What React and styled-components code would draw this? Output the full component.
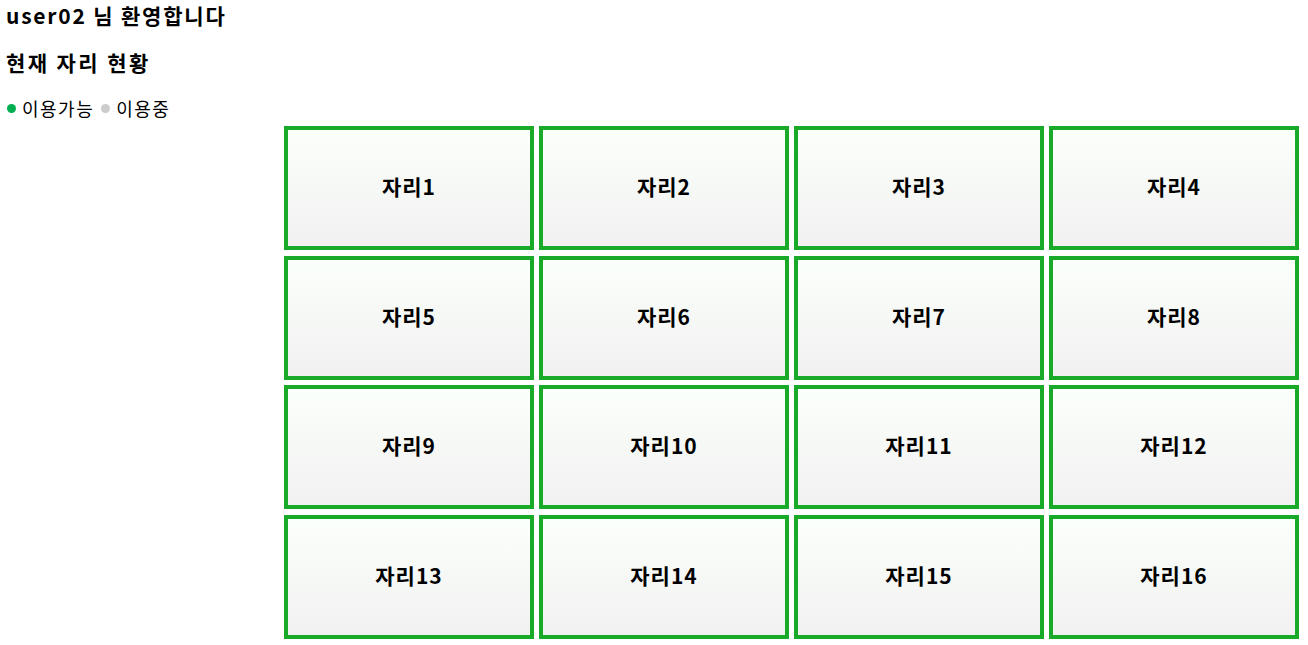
import React from "react";
import styled, { createGlobalStyle } from "styled-components";

const GlobalStyle = createGlobalStyle`
  body {
    margin: 0;
    background: #fff;
    font-family: "Noto Sans CJK KR", "Noto Sans", sans-serif;
    color: #000;
  }
`;

const Page = styled.div`
  padding: 3px 6px;
`;

const Title = styled.h3`
  margin: 0;
  font-size: 21px;
  line-height: 24px;
  font-weight: 700;
  letter-spacing: 1.8px;
`;

const SubTitle = styled(Title)`
  margin-top: 23px;
  letter-spacing: 2.4px;
`;

const Legend = styled.div`
  display: flex;
  align-items: center;
  margin-top: 23px;
  font-size: 18px;
  line-height: 22px;
  letter-spacing: 1.5px;
`;

const LegendItem = styled.span`
  display: inline-flex;
  align-items: center;
  margin-right: 6px;
`;

const Dot = styled.span`
  display: inline-block;
  width: 9px;
  height: 9px;
  border-radius: 50%;
  margin: 0 6px 0 1px;
  background: ${(p) => p.color};
`;

const SeatGrid = styled.div`
  display: grid;
  grid-template-columns: repeat(4, 250px);
  grid-auto-rows: 124px;
  column-gap: 5px;
  row-gap: 5.7px;
  margin: 7px 0 0 278px;
`;

const Seat = styled.button`
  box-sizing: border-box;
  border: 4px solid #1aaa2a;
  background: linear-gradient(to bottom, #fbfffb, #f1f1f1);
  font-family: "Noto Sans CJK KR", "Noto Sans", sans-serif;
  font-size: 21px;
  font-weight: 700;
  letter-spacing: 1px;
  color: #000;
  cursor: pointer;
  padding: 0 0 4px;
`;

const seats = Array.from({ length: 16 }, (_, i) => `자리${i + 1}`);

const App = () => {
  return (
    <Page>
      <GlobalStyle />
      <Title>user02 님 환영합니다</Title>
      <SubTitle>현재 자리 현황</SubTitle>
      <Legend>
        <LegendItem>
          <Dot color="#00b050" />
          이용가능
        </LegendItem>
        <LegendItem>
          <Dot color="#cccccc" />
          이용중
        </LegendItem>
      </Legend>
      <SeatGrid>
        {seats.map((name) => (
          <Seat key={name}>{name}</Seat>
        ))}
      </SeatGrid>
    </Page>
  );
};

export default App;
